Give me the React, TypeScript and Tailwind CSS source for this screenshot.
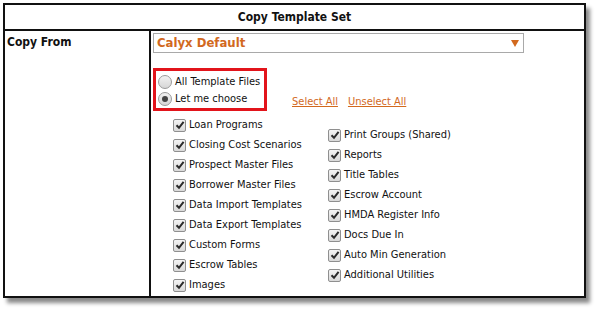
const left = [
  "Loan Programs",
  "Closing Cost Scenarios",
  "Prospect Master Files",
  "Borrower Master Files",
  "Data Import Templates",
  "Data Export Templates",
  "Custom Forms",
  "Escrow Tables",
  "Images",
];

const right = [
  "Print Groups (Shared)",
  "Reports",
  "Title Tables",
  "Escrow Account",
  "HMDA Register Info",
  "Docs Due In",
  "Auto Min Generation",
  "Additional Utilities",
];

function Check() {
  return (
    <span className="w-[13px] h-[13px] shrink-0 rounded-[2px] border border-[#8f8f8f] bg-gradient-to-b from-[#f4f4f4] to-[#d9d9d9] flex items-center justify-center">
      <svg width="10" height="10" viewBox="0 0 10 10">
        <path d="M1.5 5.2 L4 7.8 L8.6 1.8" fill="none" stroke="#2b2b2b" strokeWidth="2" />
      </svg>
    </span>
  );
}

function Radio({ on }: { on?: boolean }) {
  return (
    <span className="w-[14px] h-[14px] shrink-0 rounded-full border border-[#9a9a9a] bg-gradient-to-b from-[#f2f2f2] to-[#d6d6d6] flex items-center justify-center">
      {on && <span className="w-[6px] h-[6px] rounded-full bg-[#444]" />}
    </span>
  );
}

function Item({ label }: { label: string }) {
  return (
    <div className="h-[20px] flex items-center gap-[3px] whitespace-nowrap">
      <Check />
      <span>{label}</span>
    </div>
  );
}

export default function App() {
  return (
    <div
      className="w-[598px] h-[311px] bg-white pl-[3px] pt-[3px] text-[11px] text-[#111]"
      style={{ fontFamily: '"DejaVu Sans Condensed", "DejaVu Sans", Verdana, sans-serif' }}
    >
      <div className="w-[583px] h-[295px] border-2 border-[#111] bg-white shadow-[4px_5px_4px_#8a8a8a] flex flex-col">
        <div className="h-[26px] shrink-0 border-b-2 border-[#111] flex items-center justify-center font-bold text-[12px]">
          Copy Template Set
        </div>
        <div className="flex flex-1">
          <div className="w-[146px] shrink-0 border-r-2 border-[#111] pl-[2px] pt-[2px] font-bold text-[12px]">
            Copy From
          </div>
          <div className="flex-1 pl-[2px] pt-[2px]">
            <div className="w-[371px] h-[20px] border border-[#a9a9a9] flex items-center justify-between pl-[3px] pr-[4px]">
              <span className="font-bold text-[13px] text-[#d2691e]">Calyx Default</span>
              <svg width="8" height="7" viewBox="0 0 8 7">
                <path d="M0 0 H8 L4 7 Z" fill="#d2691e" />
              </svg>
            </div>
            <div className="flex items-end mt-[15px]">
              <div className="w-[114px] h-[43px] border-[3px] border-[#e2141b] pl-[2px] pt-[2px] flex flex-col justify-center whitespace-nowrap">
                <div className="h-[19px] flex items-center gap-[3px]">
                  <Radio />
                  <span>All Template Files</span>
                </div>
                <div className="h-[19px] flex items-center gap-[3px]">
                  <Radio on />
                  <span>Let me choose</span>
                </div>
              </div>
              <div className="flex gap-[10px] ml-[25px] mb-[1px] text-[#d2691e]">
                <span className="underline">Select All</span>
                <span className="underline">Unselect All</span>
              </div>
            </div>
            <div className="flex mt-[4px] pl-[20px]">
              <div className="w-[155px]">
                {left.map((l) => (
                  <Item key={l} label={l} />
                ))}
              </div>
              <div className="pt-[10px]">
                {right.map((l) => (
                  <Item key={l} label={l} />
                ))}
              </div>
            </div>
          </div>
        </div>
      </div>
    </div>
  );
}
